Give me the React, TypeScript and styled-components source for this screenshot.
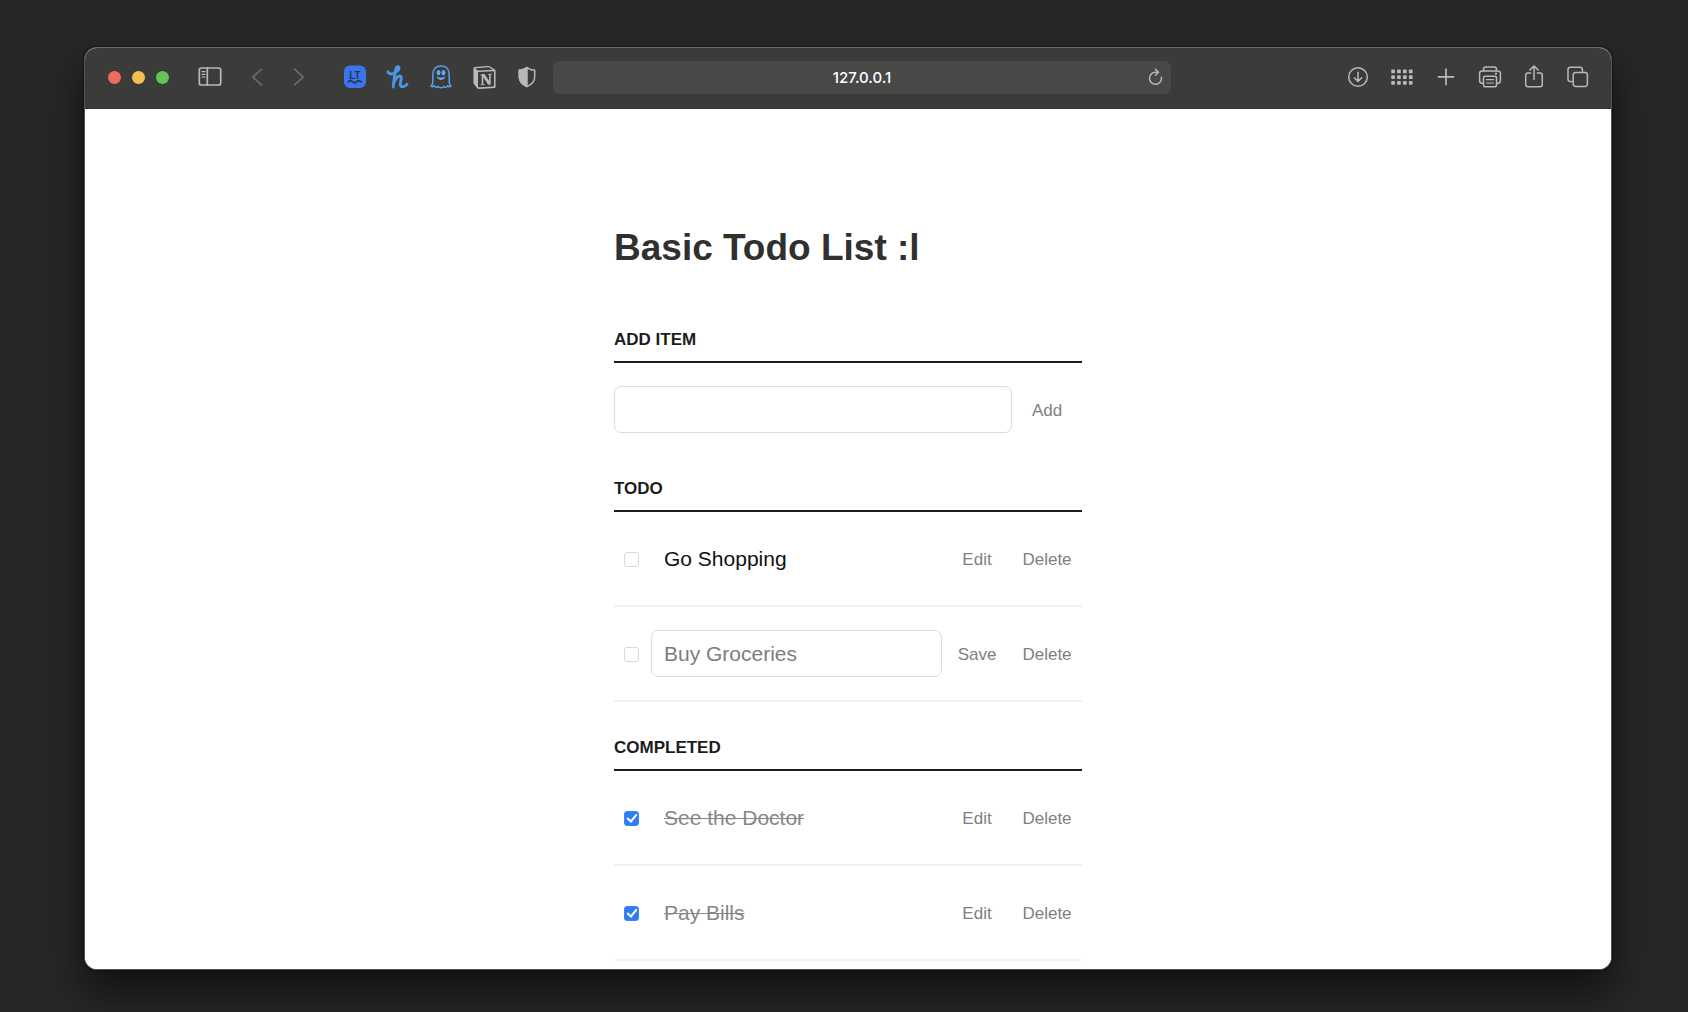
import React from "react";
import styled, { createGlobalStyle, css } from "styled-components";
import { SiNotion } from "react-icons/si";

const GlobalStyle = createGlobalStyle`
  *, *::before, *::after { box-sizing: border-box; }
  body {
    margin: 0;
    background: #272727;
    font-family: "Liberation Sans", Arial, sans-serif;
  }
  h1, h2, ul { margin: 0; padding: 0; }
  button, input { font-family: inherit; }
`;

const Desktop = styled.div`
  display: flex;
  height: 100vh;
  padding: 47px 76px 42px 84px;
  background: #272727;
  overflow: hidden;
`;

const BrowserWindow = styled.div`
  flex: 1;
  min-width: 0;
  display: flex;
  flex-direction: column;
  border: 1px solid #555;
  border-top-color: #6b6b6a;
  border-radius: 13px;
  background: #fff;
  overflow: hidden;
  box-shadow: 0 0 2px #000, 0 22px 44px rgba(0, 0, 0, 0.6);
`;

const Toolbar = styled.header`
  flex: none;
  display: flex;
  align-items: center;
  height: 61px;
  padding: 0 21px 2px 22px;
  background: #3b3b3a;
  border-bottom: 1px solid #333;
  color: #b9b9b8;
`;

const Lights = styled.div`
  display: flex;
  gap: 9px;
  margin-right: 28px;
`;

const Light = styled.button<{ $color: string }>`
  width: 15px;
  height: 15px;
  padding: 0;
  border: 1px solid #2c3238;
  border-radius: 50%;
  background: ${(p) => p.$color};
`;

const IconGroup = styled.div<{ $gap: number }>`
  display: flex;
  align-items: center;
  gap: ${(p) => p.$gap}px;
`;

const History = styled(IconGroup)`
  margin: 0 32px 0 23px;
  color: #6a6a69;
`;

const IconButton = styled.button`
  display: flex;
  width: 24px;
  height: 24px;
  padding: 0;
  border: 0;
  background: none;
  color: inherit;
  align-items: center;
  justify-content: center;
`;

const AddressBar = styled.div`
  flex: 1;
  display: flex;
  align-items: center;
  height: 33px;
  margin: 0 175px 0 14px;
  padding: 0 3px;
  border-radius: 7px;
  background: #484847;
`;

const Address = styled.input`
  flex: 1;
  min-width: 0;
  padding: 2px 0 0 24px;
  border: 0;
  outline: 0;
  background: none;
  color: #fff;
  font: 500 15px/20px Inter, sans-serif;
  text-align: center;
`;

const Page = styled.main`
  flex: 1;
  min-height: 0;
  overflow: hidden;
  background: #fff;
`;

const Column = styled.div`
  width: 468px;
  max-width: 100%;
  margin: 0 auto;
  padding-top: 116px;
`;

const Title = styled.h1`
  color: #303030;
  font-size: 37px;
  line-height: 46px;
  font-weight: 700;
`;

const SectionTitle = styled.h2<{ $space: number }>`
  margin-top: ${(p) => p.$space}px;
  padding-bottom: 11px;
  border-bottom: 2px solid #1c1c1c;
  color: #1c1c1c;
  font-size: 17px;
  line-height: 20px;
  font-weight: 700;
  text-transform: uppercase;
`;

const rowLayout = css`
  display: flex;
  align-items: center;
  padding: 23px 0;
`;

const AddForm = styled.form`
  ${rowLayout}
`;

const List = styled.ul`
  list-style: none;
`;

const Item = styled.li`
  ${rowLayout}
  border-bottom: 2px solid #f2f2f2;
`;

const Check = styled.input`
  appearance: none;
  flex: none;
  display: grid;
  place-items: center;
  width: 15px;
  height: 15px;
  margin: 2px 12px 0 10px;
  border: 1px solid #d8d8d8;
  border-radius: 3px;
  background: #fff;

  &:checked {
    border-color: #3d86f7;
    background: #2f7cf6;
  }
  &:checked::after {
    content: "";
    width: 6px;
    height: 10px;
    margin-bottom: 3px;
    border: solid #fff;
    border-width: 0 2px 2px 0;
    transform: rotate(40deg);
  }
`;

const TextField = styled.input`
  flex: 1;
  min-width: 0;
  height: 47px;
  padding: 0 12px;
  border: 1px solid #dcdcdc;
  border-radius: 7px;
  outline: 0;
  background: #fff;
  color: #7d7d7d;
  font-size: 21px;
`;

const ItemLabel = styled.label<{ $done: boolean }>`
  flex: 1;
  padding: 0 13px;
  color: ${(p) => (p.$done ? "#868686" : "#111")};
  font-size: 21px;
  line-height: 47px;
  text-decoration: ${(p) => (p.$done ? "line-through" : "none")};
  text-decoration-thickness: 1px;
`;

const Action = styled.button`
  flex: none;
  width: 70px;
  height: 47px;
  padding: 3px 0 0;
  border: 0;
  background: none;
  color: #808080;
  font-size: 17px;
  text-align: center;
`;

type IconProps = { children: React.ReactNode; size?: number; width?: number };

function Icon({ children, size = 24, width = 1.5 }: IconProps) {
  return (
    <svg
      width={size}
      height={size}
      viewBox={`0 0 ${size} ${size}`}
      fill="none"
      stroke="currentColor"
      strokeWidth={width}
      strokeLinecap="round"
      strokeLinejoin="round"
      aria-hidden="true"
    >
      {children}
    </svg>
  );
}

const SidebarIcon = () => (
  <Icon width={1.7}>
    <rect x="1.3" y="3" width="21.4" height="17" rx="2" />
    <path d="M9.3 3v17" />
    <path d="M4 6.6h3M4 9.3h3M4 12h3" strokeWidth="1.2" />
  </Icon>
);

const LanguageToolIcon = () => (
  <Icon>
    <rect x="1" y="0.5" width="22" height="22.5" rx="6" fill="#3a74ee" stroke="none" />
    <text x="12" y="13.5" textAnchor="middle" fontSize="10" fontWeight="700" fontFamily="Liberation Sans, sans-serif" fill="#27344f" stroke="none">
      LT
    </text>
    <path d="M5.4 16.8c1.5-1.6 2.6-1.6 4 0s2.8 1.3 4 0 2.700-1.5 4.8 0" stroke="#27344f" strokeWidth="1.7" />
  </Icon>
);

const HoneyIcon = () => (
  <Icon width={2.8}>
    <g stroke="#4a96ea">
      <path d="M2 6.800c.8 2.700 5.500 3 8.700 0 2.600-2.400 3.200-5 1.200-5.100-2.800 0-3.200 7.500-4.700 20.300" />
      <path d="M7.800 18c1.600-4 4.200-7.200 6.300-7 2.900.4-.4 6.300.2 8.800.6 2.700 4.800 2.400 6.700-.6" />
    </g>
  </Icon>
);

const GhostIcon = () => (
  <Icon width={1.5}>
    <path
      stroke="#5aa0e6"
      d="M3.8 9.4C3.8 4 7.200 0.9 12 0.9s8.200 3.1 8.200 8.5V17c0 2 .7 3.300 1.800 4.400-1.300.7-2.600.3-3.500-.5-1 1.800-2.600 2-3.500.4-1 1.900-5 1.900-6 0-.9 1.600-2.500 1.400-3.500-.4-.9.800-2.200 1.200-3.500.5 1.100-1.100 1.800-2.400 1.800-4.400z"
    />
    <ellipse cx="9.5" cy="7.6" rx="2" ry="2.7" fill="#5aa8f0" stroke="none" />
    <ellipse cx="14.5" cy="7.6" rx="2" ry="2.7" fill="#5aa8f0" stroke="none" />
    <path d="M7.500 11.600c1.400 4.600 7.600 4.600 9 0-2.400 1.200-6.600 1.200-9 0z" fill="#5aa8f0" stroke="none" />
  </Icon>
);

const ShieldIcon = () => (
  <Icon>
    <path d="M12 2.600c2 1.600 4.600 2.500 7.700 2.700v6.500c0 4.500-3 7.800-7.700 9.800-4.700-2-7.700-5.300-7.700-9.800V5.300C7.400 5.100 10 4.200 12 2.600z" />
    <path d="M12 2.600v19c-4.700-2-7.700-5.300-7.700-9.800V5.300C7.400 5.100 10 4.200 12 2.600z" fill="currentColor" />
  </Icon>
);

const GridIcon = () => (
  <Icon>
    <g fill="currentColor" stroke="none">
      {[4.5, 10.3, 16.1].map((y) =>
        [1.2, 7.1, 13, 18.9].map((x) => <rect key={`${x}-${y}`} x={x} y={y} width="3.7" height="3.7" rx="0.8" />)
      )}
    </g>
  </Icon>
);

const PrinterIcon = () => (
  <Icon>
    <path d="M5.600 5.800V3.900c0-1.100.7-1.800 1.800-1.800h9.200c1.100 0 1.800.7 1.800 1.800v1.900" />
    <path d="M5.400 18.200H4c-1.500 0-2.400-.9-2.400-2.400V8.300c0-1.500.9-2.400 2.400-2.400h16c1.500 0 2.400.9 2.400 2.400v7.500c0 1.500-.9 2.400-2.400 2.400h-1.400" />
    <rect x="5.5" y="11.2" width="13" height="10.5" rx="1.5" />
    <path d="M8.500 14.700h7M8.500 18h7" strokeWidth="1.2" />
    <circle cx="18" cy="8.7" r="1.1" fill="currentColor" stroke="none" />
  </Icon>
);

type Todo = { id: string; text: string; done?: boolean; editing?: boolean };

const todo: Todo[] = [
  { id: "shopping", text: "Go Shopping" },
  { id: "groceries", text: "Buy Groceries", editing: true },
];

const completed: Todo[] = [
  { id: "doctor", text: "See the Doctor", done: true },
  { id: "bills", text: "Pay Bills", done: true },
];

function TodoItem({ item }: { item: Todo }) {
  return (
    <Item>
      <Check type="checkbox" id={item.id} defaultChecked={item.done} aria-label={item.text} />
      {item.editing ? (
        <TextField type="text" defaultValue={item.text} aria-label={`Edit ${item.text}`} />
      ) : (
        <ItemLabel htmlFor={item.id} $done={!!item.done}>
          {item.text}
        </ItemLabel>
      )}
      <Action type="button">{item.editing ? "Save" : "Edit"}</Action>
      <Action type="button">Delete</Action>
    </Item>
  );
}

function BrowserToolbar() {
  return (
    <Toolbar>
      <Lights>
        <Light $color="#ed6a5e" aria-label="Close" />
        <Light $color="#f5bf4f" aria-label="Minimize" />
        <Light $color="#61c554" aria-label="Zoom" />
      </Lights>
      <IconButton aria-label="Sidebar"><SidebarIcon /></IconButton>
      <History $gap={18}>
        <IconButton aria-label="Back">
          <Icon width={1.7}><path d="M16.500 4.200 7.800 12l8.700 7.800" /></Icon>
        </IconButton>
        <IconButton aria-label="Forward">
          <Icon width={1.7}><path d="M7.500 4.200 16.200 12l-8.700 7.800" /></Icon>
        </IconButton>
      </History>
      <IconGroup $gap={19}>
        <IconButton aria-label="LanguageTool"><LanguageToolIcon /></IconButton>
        <IconButton aria-label="Honey"><HoneyIcon /></IconButton>
        <IconButton aria-label="Ghostery"><GhostIcon /></IconButton>
        <IconButton aria-label="Notion"><SiNotion size={23} /></IconButton>
        <IconButton aria-label="Privacy report"><ShieldIcon /></IconButton>
      </IconGroup>
      <AddressBar>
        <Address type="text" defaultValue="127.0.0.1" aria-label="Address" />
        <IconButton aria-label="Reload">
          <Icon>
            <path d="M17.400 12.300a6 6 0 1 1-5.400-5h1.600" />
            <path d="m11.500 4.300 3 3-3 3" />
          </Icon>
        </IconButton>
      </AddressBar>
      <IconGroup $gap={20}>
        <IconButton aria-label="Downloads">
          <Icon>
            <circle cx="12" cy="12" r="9.3" />
            <path d="M12 7.200v9M8.300 12.700l3.700 3.700 3.700-3.700" />
          </Icon>
        </IconButton>
        <IconButton aria-label="Top sites"><GridIcon /></IconButton>
        <IconButton aria-label="New tab">
          <Icon width={1.7}><path d="M12 4.200v15.200M4.400 11.800h15.200" /></Icon>
        </IconButton>
        <IconButton aria-label="Print"><PrinterIcon /></IconButton>
        <IconButton aria-label="Share">
          <Icon>
            <path d="M8.600 8H6c-1.500 0-2.300.8-2.300 2.300v9.100c0 1.500.8 2.300 2.300 2.300h12c1.500 0 2.300-.8 2.300-2.300v-9.100C20.300 8.800 19.500 8 18 8h-2.600" />
            <path d="M12 14.500V1.200M8 4.900l4-3.900 4 3.900" />
          </Icon>
        </IconButton>
        <IconButton aria-label="Tab overview">
          <Icon>
            <rect x="7.2" y="7.4" width="14.2" height="14" rx="2.3" />
            <path d="M7 16.500H4.300C2.800 16.500 2 15.700 2 14.200V4.500C2 3 2.800 2.200 4.300 2.200h9.800c1.500 0 2.300.8 2.300 2.300v2.700" />
          </Icon>
        </IconButton>
      </IconGroup>
    </Toolbar>
  );
}

export default function App() {
  return (
    <>
      <GlobalStyle />
      <Desktop>
        <BrowserWindow>
          <BrowserToolbar />
          <Page>
            <Column>
              <Title>Basic Todo List :l</Title>
              <SectionTitle $space={59}>Add Item</SectionTitle>
              <AddForm onSubmit={(e) => e.preventDefault()}>
                <TextField type="text" aria-label="New item" />
                <Action type="submit">Add</Action>
              </AddForm>
              <SectionTitle $space={23}>Todo</SectionTitle>
              <List>
                {todo.map((item) => <TodoItem key={item.id} item={item} />)}
              </List>
              <SectionTitle $space={36}>Completed</SectionTitle>
              <List>
                {completed.map((item) => <TodoItem key={item.id} item={item} />)}
              </List>
            </Column>
          </Page>
        </BrowserWindow>
      </Desktop>
    </>
  );
}
